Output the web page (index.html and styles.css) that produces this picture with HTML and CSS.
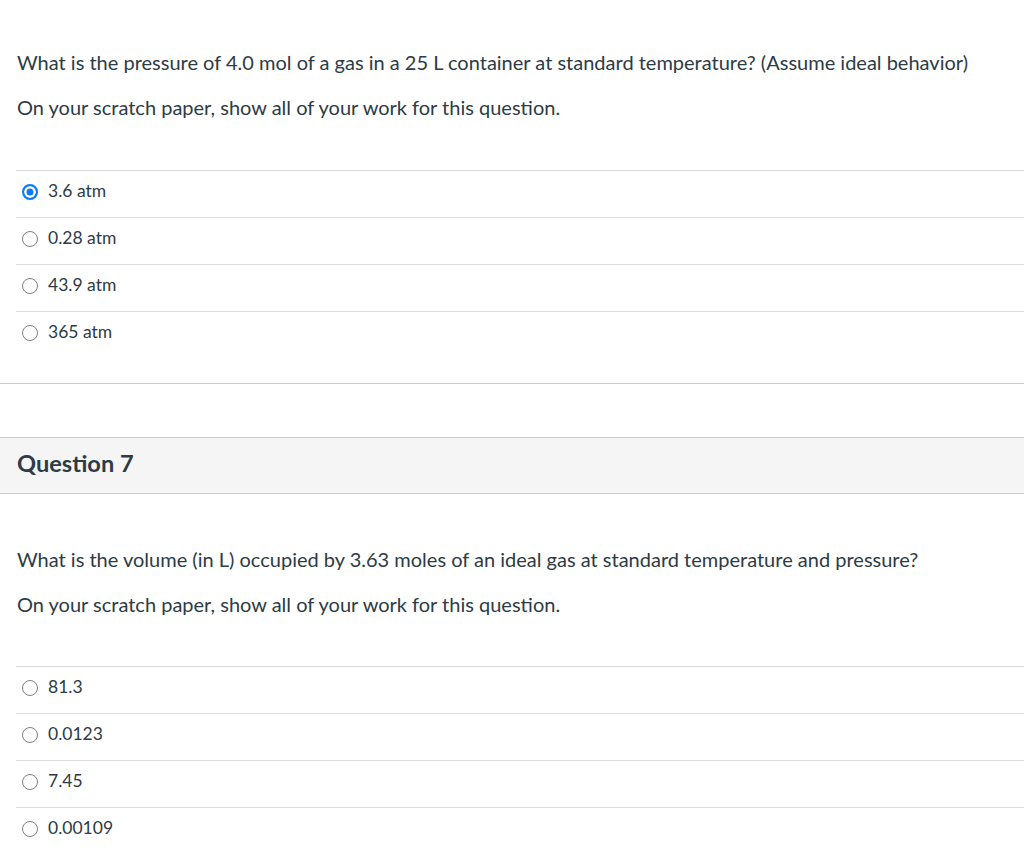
FILE: index.html
```html
<!DOCTYPE html>
<html lang="en">
<head>
<meta charset="utf-8">
<title>Quiz</title>
<link rel="stylesheet" href="styles.css">
</head>
<body>
<div class="question q6">
  <div class="question-text">
    <p>What is the pressure of 4.0 mol of a gas in a 25 L container at standard temperature? (Assume ideal behavior)</p>
    <p>On your scratch paper, show all of your work for this question.</p>
  </div>
  <div class="answers">
    <label class="answer"><span class="radio checked"></span><span class="answer-text">3.6 atm</span></label>
    <label class="answer"><span class="radio"></span><span class="answer-text">0.28 atm</span></label>
    <label class="answer"><span class="radio"></span><span class="answer-text">43.9 atm</span></label>
    <label class="answer"><span class="radio"></span><span class="answer-text">365 atm</span></label>
  </div>
</div>

<div class="question q7">
  <div class="question-header">
    <h2>Question 7</h2>
  </div>
  <div class="question-text">
    <p>What is the volume (in L) occupied by 3.63 moles of an ideal gas at standard temperature and pressure?</p>
    <p>On your scratch paper, show all of your work for this question.</p>
  </div>
  <div class="answers">
    <label class="answer"><span class="radio"></span><span class="answer-text">81.3</span></label>
    <label class="answer"><span class="radio"></span><span class="answer-text">0.0123</span></label>
    <label class="answer"><span class="radio"></span><span class="answer-text">7.45</span></label>
    <label class="answer"><span class="radio"></span><span class="answer-text">0.00109</span></label>
  </div>
</div>
</body>
</html>
```

FILE: styles.css
```css
html, body {
  margin: 0;
  padding: 0;
  background: #ffffff;
}

body {
  font-family: Lato, "Open Sans", "Liberation Sans", sans-serif;
  color: #2d3b45;
  overflow: hidden;
}

.question-text {
  padding: 0 17px;
  font-size: 20px;
}

.question-text p {
  margin: 0;
  line-height: 26px;
}

.question-text p + p {
  margin-top: 19px;
}

.q6 {
  padding-top: 49px;
  padding-bottom: 25px;
  border-bottom: 1px solid #c7cdd1;
}

.q6 .answers {
  margin-top: 50px;
}

.answers {
  margin-left: 16px;
  border-top: 1px solid #dcdfe1;
}

.answer {
  display: flex;
  align-items: flex-start;
  gap: 10px;
  padding: 9px 0 15px 6px;
  line-height: 22px;
  font-size: 17.5px;
  border-bottom: 1px solid #dcdfe1;
}

.answer:last-child {
  border-bottom: none;
}

.radio {
  box-sizing: border-box;
  width: 16px;
  height: 16px;
  margin-top: 4px;
  border-radius: 50%;
  border: 1.5px solid #808080;
  background: #fff;
  flex: none;
}

.radio.checked {
  border: 2px solid #0b7cf5;
  background: #0b7cf5;
  box-shadow: inset 0 0 0 2.5px #fff;
}

.q7 {
  margin-top: 53px;
}

.question-header {
  box-sizing: border-box;
  background: #f5f5f5;
  border-top: 1px solid #c7cdd1;
  border-bottom: 1px solid #c7cdd1;
  height: 57px;
  display: flex;
  align-items: center;
  padding: 0 17px 5px;
}

.question-header h2 {
  margin: 0;
  font-size: 23.6px;
  font-weight: 700;
  color: #2d3b45;
}

.q7 .question-text {
  padding-top: 52px;
}

.q7 .answers {
  margin-top: 49px;
}
```
